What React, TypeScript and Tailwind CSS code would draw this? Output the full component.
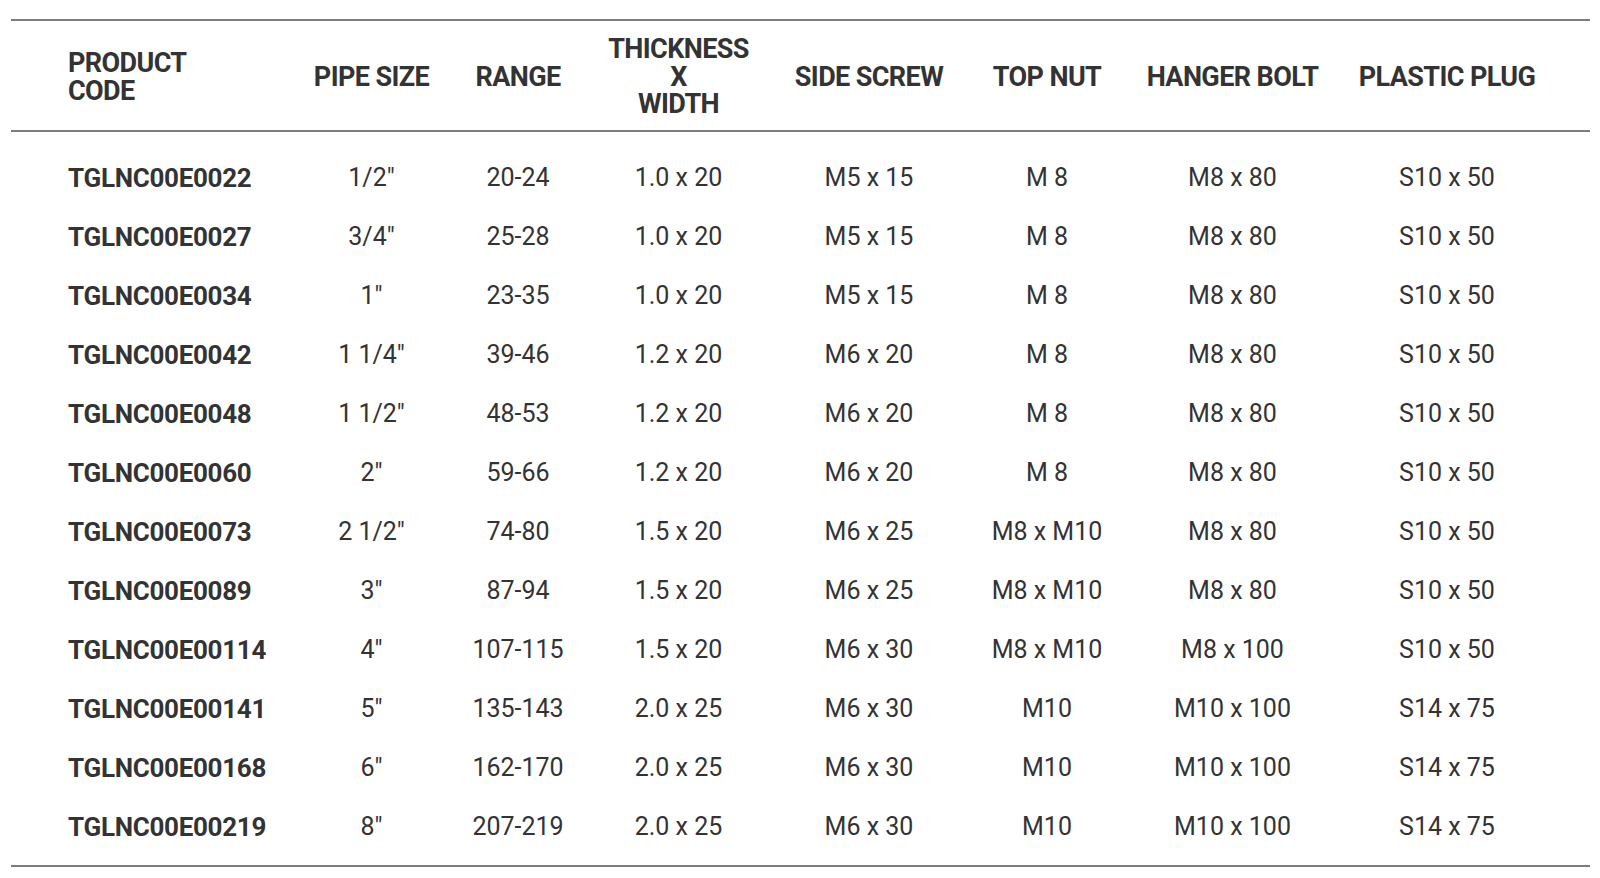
import React from "react";

const rows: string[][] = [
  ["TGLNC00E0022", '1/2"', "20-24", "1.0 x 20", "M5 x 15", "M 8", "M8 x 80", "S10 x 50"],
  ["TGLNC00E0027", '3/4"', "25-28", "1.0 x 20", "M5 x 15", "M 8", "M8 x 80", "S10 x 50"],
  ["TGLNC00E0034", '1"', "23-35", "1.0 x 20", "M5 x 15", "M 8", "M8 x 80", "S10 x 50"],
  ["TGLNC00E0042", '1 1/4"', "39-46", "1.2 x 20", "M6 x 20", "M 8", "M8 x 80", "S10 x 50"],
  ["TGLNC00E0048", '1 1/2"', "48-53", "1.2 x 20", "M6 x 20", "M 8", "M8 x 80", "S10 x 50"],
  ["TGLNC00E0060", '2"', "59-66", "1.2 x 20", "M6 x 20", "M 8", "M8 x 80", "S10 x 50"],
  ["TGLNC00E0073", '2 1/2"', "74-80", "1.5 x 20", "M6 x 25", "M8 x M10", "M8 x 80", "S10 x 50"],
  ["TGLNC00E0089", '3"', "87-94", "1.5 x 20", "M6 x 25", "M8 x M10", "M8 x 80", "S10 x 50"],
  ["TGLNC00E00114", '4"', "107-115", "1.5 x 20", "M6 x 30", "M8 x M10", "M8 x 100", "S10 x 50"],
  ["TGLNC00E00141", '5"', "135-143", "2.0 x 25", "M6 x 30", "M10", "M10 x 100", "S14 x 75"],
  ["TGLNC00E00168", '6"', "162-170", "2.0 x 25", "M6 x 30", "M10", "M10 x 100", "S14 x 75"],
  ["TGLNC00E00219", '8"', "207-219", "2.0 x 25", "M6 x 30", "M10", "M10 x 100", "S14 x 75"],
];

const grid =
  "grid grid-cols-[287px_147px_146px_175px_206px_150px_221px_208px_1fr]";

export default function App() {
  return (
    <div
      className="min-h-[878px] w-full bg-white text-[#333333]"
      style={{ fontFamily: "Roboto, 'Liberation Sans', sans-serif" }}
    >
      <div className="ml-[11px] mr-[10px] pt-[19px]">
        <div className="h-[2px] bg-[#7d7d7d]" />
        <div className={`${grid} h-[109px] pt-[4px] items-center text-[27px] font-bold leading-[27.5px] tracking-[-0.6px] uppercase`}>
          <div className="pl-[57px] text-left">
            PRODUCT
            <br />
            CODE
          </div>
          <div className="text-center">PIPE SIZE</div>
          <div className="text-center">RANGE</div>
          <div className="text-center">
            THICKNESS
            <br />
            X
            <br />
            WIDTH
          </div>
          <div className="text-center">SIDE SCREW</div>
          <div className="text-center">TOP NUT</div>
          <div className="text-center">HANGER BOLT</div>
          <div className="text-center">PLASTIC PLUG</div>
          <div />
        </div>
        <div className="h-[2px] bg-[#7d7d7d]" />
        <div className="pt-[16px] pb-[9px]">
          {rows.map((r) => (
            <div key={r[0]} className={`${grid} h-[59px] items-center text-[25px] leading-none`}>
              <div className="pl-[57px] text-left text-[26px] font-bold tracking-[-0.3px]">{r[0]}</div>
              {r.slice(1).map((c, i) => (
                <div key={i} className="text-center">
                  {c}
                </div>
              ))}
              <div />
            </div>
          ))}
        </div>
        <div className="h-[2px] bg-[#7d7d7d]" />
      </div>
    </div>
  );
}
